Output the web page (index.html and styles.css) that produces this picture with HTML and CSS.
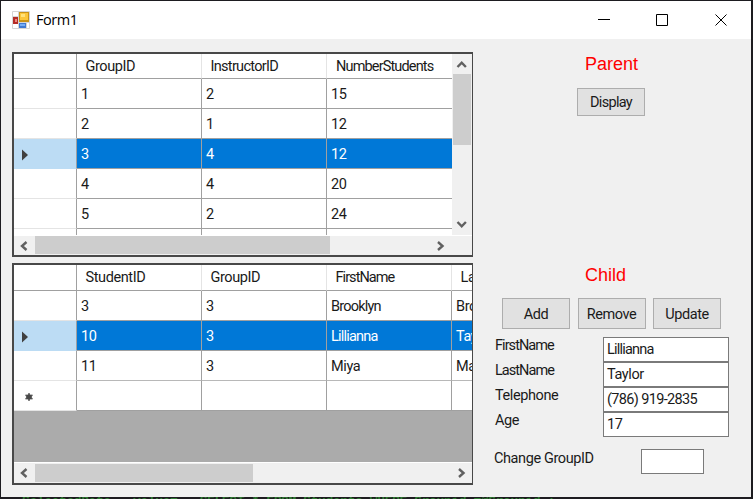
FILE: index.html
```html
<!DOCTYPE html>
<html lang="en">
<head>
<meta charset="utf-8">
<title>Form1</title>
<link rel="stylesheet" href="styles.css">
</head>
<body>
<div class="window">
  <header class="titlebar">
    <svg class="app-icon" width="18" height="18" viewBox="0 0 18 18">
      <rect width="18" height="18" rx="1" fill="#d5d5d5"/>
      <path d="M1 1h5v4H1zM1 13h5v4H1zM15 12h2v5h-2z" fill="#fff"/>
      <rect x="7" y="1" width="10" height="10" fill="#c99316"/><rect x="8" y="2" width="8" height="7" fill="#fcc63a"/><rect x="9" y="3" width="4" height="3" fill="#ffe27b"/>
      <rect x="1" y="6" width="5" height="7" fill="#b52c27"/><rect x="3" y="8" width="2" height="3" fill="#ec8780"/>
      <rect x="7" y="12" width="7" height="5" fill="#3f79d2"/><rect x="8" y="13" width="5" height="2" fill="#75adf5"/>
    </svg>
    <h1>Form1</h1>
    <svg class="controls" width="130" height="14" viewBox="0 0 130 14" fill="none" stroke="#000">
      <path d="M0 6.5h12M58.5 1.5h11v11h-11zM117.5 1.5l11 11M128.5 1.5l-11 11"/>
    </svg>
  </header>
  <main class="form">
    <div class="grids">
      <section class="grid parent-grid">
        <div class="view">
          <div class="cells">
            <div class="row head"><i></i><b>GroupID</b><b class="instructor">InstructorID</b><b class="students">NumberStudents</b></div>
            <div class="row"><i></i><span>1</span><span>2</span><span>15</span></div>
            <div class="row"><i></i><span>2</span><span>1</span><span>12</span></div>
            <div class="row selected"><i><svg width="8" height="12" viewBox="0 0 8 12"><path d="M1 .5v11L7 6z" fill="#404040"/></svg></i><span>3</span><span>4</span><span>12</span></div>
            <div class="row"><i></i><span>4</span><span>4</span><span>20</span></div>
            <div class="row"><i></i><span>5</span><span>2</span><span>24</span></div>
            <div class="row"><i></i><span></span><span></span><span></span></div>
          </div>
          <div class="vscroll">
            <svg width="20" height="20" viewBox="0 0 20 20"><path d="M5.5 13l4.2-4.3 4.2 4.3"/></svg>
            <div class="thumb"></div>
            <svg width="20" height="20" viewBox="0 0 20 20"><path d="M5.5 7l4.2 4.3L13.900 7"/></svg>
          </div>
        </div>
        <div class="hscroll">
          <svg width="21" height="20" viewBox="0 0 21 20"><path d="M12.500 6L8 10l4.500 4"/></svg>
          <div class="thumb"></div>
          <svg class="right" width="21" height="20" viewBox="0 0 21 20"><path d="M8 6l4.500 4L8 14"/></svg>
        </div>
      </section>
      <section class="grid child-grid">
        <div class="view">
          <div class="cells">
            <div class="row head"><i></i><b>StudentID</b><b>GroupID</b><b class="tight">FirstName</b><b>LastName</b></div>
            <div class="row"><i></i><span>3</span><span>3</span><span class="name">Brooklyn</span><span>Brown</span></div>
            <div class="row selected"><i><svg width="8" height="12" viewBox="0 0 8 12"><path d="M1 .5v11L7 6z" fill="#404040"/></svg></i><span>10</span><span>3</span><span class="name">Lillianna</span><span>Taylor</span></div>
            <div class="row pale"><i></i><span>11</span><span>3</span><span>Miya</span><span>Martin</span></div>
            <div class="row"><i class="new"><svg width="8" height="8" viewBox="0 0 8 8"><path d="M4 0v8M.5 2l7 4M7.500 2l-7 4" stroke="#606060" stroke-width="1.500"/><circle cx="4" cy="4" r="2.800" fill="#484848"/></svg></i><span></span><span></span><span></span><span></span></div>
          </div>
        </div>
        <div class="hscroll">
          <svg width="21" height="20" viewBox="0 0 21 20"><path d="M12.500 6L8 10l4.500 4"/></svg>
          <div class="thumb"></div>
          <svg class="right" width="21" height="20" viewBox="0 0 21 20"><path d="M8 6l4.500 4L8 14"/></svg>
        </div>
      </section>
    </div>
    <div class="panel">
      <h2 class="parent-title">Parent</h2>
      <button class="display">Display</button>
      <h2 class="child-title">Child</h2>
      <div class="buttons"><button>Add</button><button class="remove">Remove</button><button>Update</button></div>
      <div class="fields">
        <div class="field"><label class="tight">FirstName</label><div class="input name">Lillianna</div></div>
        <div class="field"><label class="tight">LastName</label><div class="input">Taylor</div></div>
        <div class="field"><label>Telephone</label><div class="input phone">(786) 919-2835</div></div>
        <div class="field"><label>Age</label><div class="input">17</div></div>
      </div>
      <div class="change"><label>Change GroupID</label><div class="input"></div></div>
    </div>
  </main>
</div>
<div class="code">SelectedData   value=   SELECT * FROM Students WHERE Groupid =@Groupid ;</div>
</body>
</html>
```

FILE: styles.css
```css
* { box-sizing: border-box; }
body {
  margin: 0;
  width: 753px;
  height: 499px;
  overflow: hidden;
  background: #1d1c20;
  padding: 1px 2px 0 1px;
  font: 14.5px/18px Roboto, "Liberation Sans", sans-serif;
  letter-spacing: -0.4px;
  color: #1a1a1a;
}
.window { height: 496px; background: #f0f0f0; }
.titlebar {
  height: 38px;
  background: #fff;
  display: flex;
  align-items: center;
  padding-left: 11px;
}
.app-icon { margin-top: -1px; }
h1 {
  margin: -1px 0 0 6px;
  font: 14.5px/20px "Open Sans", sans-serif;
  letter-spacing: -0.45px;
  color: #000;
}
.controls { margin-left: auto; margin-right: 23px; }
.form { display: flex; height: 458px; padding: 13px 0 0 11px; }
.grids { width: 461px; display: flex; flex-direction: column; gap: 6px; }
.grid {
  border: 2px solid #484848;
  border-right-width: 1px;
  background: #fff;
  display: flex;
  flex-direction: column;
  overflow: hidden;
}
.parent-grid { height: 205px; }
.child-grid { height: 222px; background: #ababab; }
.view { flex: 1; min-height: 0; display: flex; overflow: hidden; }
.cells { flex: 1; min-width: 0; overflow: hidden; }
.row { display: flex; width: 600px; height: 30px; background: #fff; }
.row > * {
  flex: 0 0 125px;
  border-right: 1px solid #a0a0a0;
  border-bottom: 1px solid #a0a0a0;
  padding: 7px 0 0 4px;
  white-space: nowrap;
  font-weight: 400;
}
.row > i { flex-basis: 63px; border-bottom-color: #e4e4e4; padding: 10px 0 0 7px; }
.row i svg { display: block; }
.row i.new { padding: 12px 0 0 11px; }
.head { height: 25px; }
.head > b { border-right-color: #e4e4e4; padding: 4px 0 0 8.5px; }
.head > i { border-bottom-color: #a0a0a0; }
.parent-grid .row > :last-child { border-right: 0; }
.child-grid .head { height: 26px; }
.head > .instructor { letter-spacing: -0.7px; }
.head > .students { letter-spacing: -0.85px; padding-left: 9px; }
.tight { letter-spacing: -0.95px; }
.name { letter-spacing: -0.8px; }
.selected { background: #0078d7; color: #fff; }
.selected > i { background: #bcdcf4; border-bottom-color: #bcdcf4; }
.pale > span { border-bottom-color: #b8b8b8; }
.vscroll { width: 20px; background: #f0f0f0; display: flex; flex-direction: column; }
.vscroll .thumb { width: 18px; height: 71px; margin: 0 0 auto 1px; background: #cdcdcd; }
.hscroll { height: 20px; flex: none; background: #f0f0f0; border-top: 1px solid #fff; display: flex; }
.hscroll .thumb { height: 18px; width: 295px; background: #cdcdcd; margin: 0; }
.hscroll .right { margin-left: auto; }
.parent-grid .hscroll { padding-right: 21px; }
.child-grid .hscroll { height: 21px; }
.child-grid .thumb { width: 218px; margin-top: 1px; }
.hscroll svg, .vscroll svg { fill: none; stroke: #606060; stroke-width: 2.4; }
.panel { flex: 1; padding-left: 21px; }
h2 {
  margin: 0;
  font: 18px/22px "Liberation Sans", sans-serif;
  color: #f00;
  letter-spacing: 0;
}
.parent-title { padding: 1px 0 0 91px; }
button {
  font: inherit;
  letter-spacing: inherit;
  color: inherit;
  width: 68px;
  height: 31px;
  padding: 2px 0 0;
  border: 1px solid #adadad;
  background: #e1e1e1;
}
.display { display: block; height: 28px; margin: 13px 0 0 83px; padding-top: 1px; letter-spacing: -0.7px; }
.child-title { padding-left: 91px; margin-top: 148px; }
.buttons { display: flex; gap: 7.5px; margin: 12px 0 0 8px; }
.fields { margin-top: 8px; }
.field { display: flex; height: 25px; }
.field label { width: 109px; padding-left: 1px; }
.input {
  width: 126px;
  height: 25px;
  border: 1px solid #7a7a7a;
  background: #fff;
  padding: 3px 0 0 3px;
}
.phone { letter-spacing: -0.65px; }
.change { display: flex; margin-top: 12px; }
.change label { width: 147px; padding-top: 1px; }
.change .input { width: 63px; }
.code {
  height: 2px;
  overflow: hidden;
  padding-left: 21px;
  font: bold 13px/10px "Liberation Mono", monospace;
  color: #2f7a32;
  white-space: pre;
}
```
